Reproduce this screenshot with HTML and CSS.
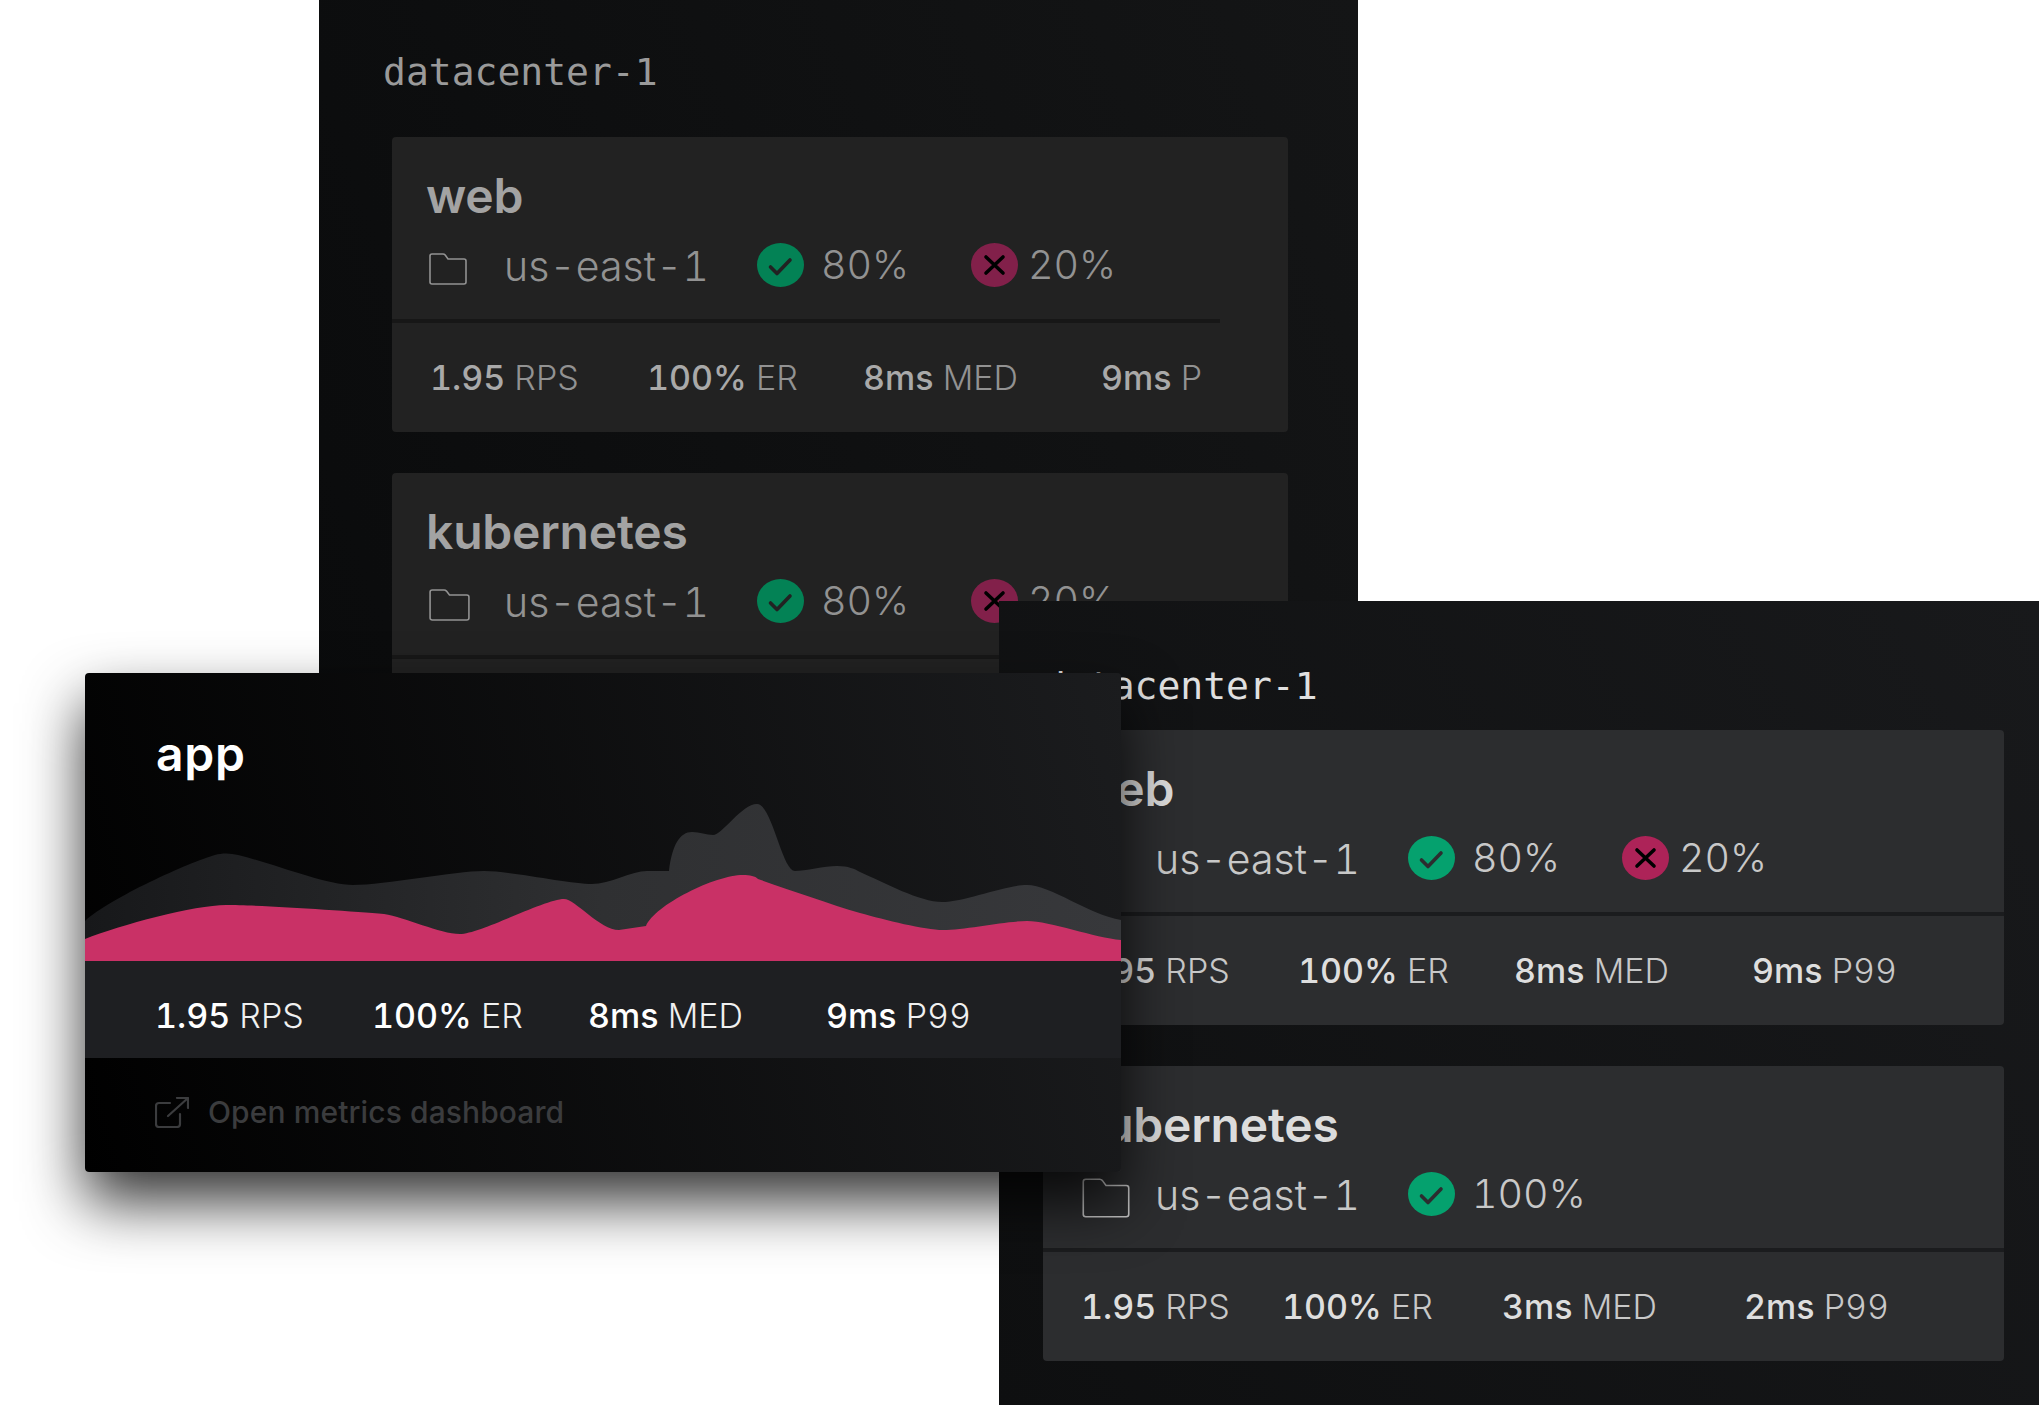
FILE: index.html
```html
<!DOCTYPE html>
<html lang="en">
<head>
    <meta charset="UTF-8">
    <meta name="viewport" content="width=device-width, initial-scale=1.0">
    <title>Datacenter overview</title>
    <link rel="stylesheet" href="styles.css">
</head>
<body>
    <svg class="defs" width="0" height="0" aria-hidden="true">
        <symbol id="icon-folder" viewBox="0 0 38 32" preserveAspectRatio="none">
            <path d="M3 1h11c1 0 1.600.4 2.200 1.100L19 6h16c1.200 0 2 .8 2 2v21c0 1.200-.8 2-2 2H3c-1.200 0-2-.8-2-2V3c0-1.200.8-2 2-2z" fill="none" stroke="currentColor" stroke-width="1.600" vector-effect="non-scaling-stroke"/>
        </symbol>
        <symbol id="icon-check" viewBox="0 0 47 44">
            <ellipse cx="23.500" cy="22" rx="23.500" ry="22" fill="var(--ok)"/>
            <path d="M13.500 24l6.500 6.500L33 17" fill="none" stroke="var(--ok-mark)" stroke-width="3.600" stroke-linecap="round" stroke-linejoin="round"/>
        </symbol>
        <symbol id="icon-cross" viewBox="0 0 47 44">
            <ellipse cx="23.500" cy="22" rx="23.500" ry="22" fill="var(--bad)"/>
            <path d="M15 14l17 16M32 14L15 30" fill="none" stroke="#000" stroke-width="3.600" stroke-linecap="round"/>
        </symbol>
    </svg>

    <!-- back window -->
    <section class="window window-back">
        <h2 class="dc-name">datacenter-1</h2>
        <div class="card">
            <div class="card-head">
                <h3>web</h3>
                <div class="health">
                    <span class="folder-slot"><svg class="folder"><use href="#icon-folder"/></svg></span>
                    <span class="region">us-east-1</span>
                    <svg class="badge"><use href="#icon-check"/></svg>
                    <span class="pct pct-ok">80%</span>
                    <svg class="badge"><use href="#icon-cross"/></svg>
                    <span class="pct pct-bad">20%</span>
                </div>
            </div>
            <div class="rule rule-short"></div>
            <div class="stats">
                <span><b>1.95</b> RPS</span>
                <span><b>100%</b> ER</span>
                <span><b>8ms</b> MED</span>
                <span><b>9ms</b> P</span>
            </div>
        </div>
        <div class="card">
            <div class="card-head">
                <h3>kubernetes</h3>
                <div class="health">
                    <span class="folder-slot"><svg class="folder folder-mid"><use href="#icon-folder"/></svg></span>
                    <span class="region">us-east-1</span>
                    <svg class="badge"><use href="#icon-check"/></svg>
                    <span class="pct pct-ok">80%</span>
                    <svg class="badge"><use href="#icon-cross"/></svg>
                    <span class="pct pct-bad">20%</span>
                </div>
            </div>
            <div class="rule rule-short"></div>
            <div class="stats">
                <span><b>1.95</b> RPS</span>
            </div>
        </div>
    </section>

    <!-- front right window -->
    <section class="window window-front">
        <h2 class="dc-name">datacenter-1</h2>
        <div class="card">
            <div class="card-head">
                <h3>web</h3>
                <div class="health">
                    <span class="folder-slot"><svg class="folder folder-inset"><use href="#icon-folder"/></svg></span>
                    <span class="region">us-east-1</span>
                    <svg class="badge"><use href="#icon-check"/></svg>
                    <span class="pct pct-ok">80%</span>
                    <svg class="badge"><use href="#icon-cross"/></svg>
                    <span class="pct pct-bad">20%</span>
                </div>
            </div>
            <div class="rule"></div>
            <div class="stats">
                <span><b>1.95</b> RPS</span>
                <span><b>100%</b> ER</span>
                <span><b>8ms</b> MED</span>
                <span><b>9ms</b> P99</span>
            </div>
        </div>
        <div class="card">
            <div class="card-head">
                <h3>kubernetes</h3>
                <div class="health">
                    <span class="folder-slot"><svg class="folder folder-big"><use href="#icon-folder"/></svg></span>
                    <span class="region">us-east-1</span>
                    <svg class="badge"><use href="#icon-check"/></svg>
                    <span class="pct">100%</span>
                </div>
            </div>
            <div class="rule"></div>
            <div class="stats stats-alt">
                <span><b>1.95</b> RPS</span>
                <span><b>100%</b> ER</span>
                <span><b>3ms</b> MED</span>
                <span><b>2ms</b> P99</span>
            </div>
        </div>
    </section>

    <!-- app popover -->
    <section class="window window-app">
        <h3>app</h3>
        <svg class="chart" viewBox="85 790 1036 171" aria-hidden="true">
            <defs>
                <linearGradient id="chart-grey" gradientUnits="userSpaceOnUse" x1="85" y1="0" x2="1120" y2="0">
                    <stop offset="0" stop-color="#17181a"/>
                    <stop offset="0.5" stop-color="#2f3032"/>
                    <stop offset="1" stop-color="#37383b"/>
                </linearGradient>
            </defs>
            <path fill="url(#chart-grey)" d="M85 961V921C110 898 190 862 215 855C222 853 230 853 238 855C275 864 325 885 353 885C385 885 455 871 484 871C510 871 570 884 592 884C610 884 632 871 647 871H669C672 845 680 832 692 832C700 832 706 835 713 835C722 835 742 804 757 804C772 804 782 871 795 871C805 871 825 866 837 866C848 866 855 869 860 872C885 883 920 902 942 902C965 902 1005 885 1027 885C1050 885 1090 915 1121 920V961Z"/>
            <path fill="#c93166" d="M85 961V939C120 925 195 905 226 905C260 905 350 911 384 914C405 917 440 934 460 934C480 934 545 899 564 899C575 899 600 930 619 930L646 926C655 905 715 875 743 875C750 875 755 876 758 879C790 890 830 904 860 913C885 920 925 930 943 930C965 930 1005 921 1027 921C1050 921 1095 938 1121 940V961Z"/>
        </svg>
        <div class="stats">
            <span><b>1.95</b> RPS</span>
            <span><b>100%</b> ER</span>
            <span><b>8ms</b> MED</span>
            <span><b>9ms</b> P99</span>
        </div>
        <a class="metrics-link" href="#">
            <svg class="link-icon" viewBox="0 0 34 31" aria-hidden="true">
                <path d="M15 6H4C2.300 6 1 7.300 1 9v18c0 1.700 1.300 3 3 3h18c1.700 0 3-1.300 3-3V17M13 19L33 1M22 1h11v10" fill="none" stroke="currentColor" stroke-width="2.200" stroke-linecap="round" stroke-linejoin="round"/>
            </svg>
            Open metrics dashboard
        </a>
    </section>
</body>
</html>
```

FILE: styles.css
```css
body {
    margin: 0;
    width: 2039px;
    height: 1407px;
    position: relative;
    overflow: hidden;
    background-color: #fff;
    font-family: Inter, "Noto Sans", sans-serif;
}

.defs {
    position: absolute;
}

h2, h3 {
    margin: 0;
}

/* windows sit on a free canvas and overlap */
.window {
    position: absolute;
    box-sizing: border-box;
    overflow: hidden;
}

.window-back {
    --card: #222222;
    --rule: #171717;
    --title: #a3a3a3;
    --text: #929292;
    --strong: #a9a9a9;
    --ok: #038255;
    --ok-mark: #222;
    --bad: #82204a;
    left: 319px;
    top: 0;
    width: 1039px;
    height: 800px;
    padding: 49px 70px 0 73px;
    background: linear-gradient(70deg, #0a0b0c 0%, #141516 100%);
}

.window-back .dc-name {
    margin: 0 0 42px -9px;
    color: #9a9a9a;
}

.window-front {
    --card: #2c2d2f;
    --rule: #1b1c1e;
    --title: #dcdcdc;
    --text: #c8c8c8;
    --strong: #dedede;
    --ok: #05a16e;
    --ok-mark: #2c2d2f;
    --bad: #ad2358;
    left: 999px;
    top: 601px;
    width: 1040px;
    height: 804px;
    padding: 62px 35px 0 44px;
    background: linear-gradient(60deg, #0e0f10 0%, #18191b 100%);
}

.window-front .dc-name {
    margin: 0 0 21px 0;
    color: #e0e0e0;
}

.dc-name {
    font-family: "DejaVu Sans Mono", monospace;
    font-size: 38px;
    font-weight: 400;
    line-height: 46px;
}

.card {
    height: 295px;
    margin-bottom: 41px;
    border-radius: 4px;
    background-color: var(--card);
}

.card-head {
    height: 182px;
    box-sizing: border-box;
    padding: 29px 0 0 34px;
}

.card-head h3 {
    font-size: 48px;
    font-weight: 600;
    letter-spacing: -0.2px;
    line-height: 60px;
    margin-bottom: 17px;
    color: var(--title);
}

.health {
    display: flex;
    align-items: center;
    height: 44px;
    color: var(--text);
    font-size: 39.5px;
    font-weight: 300;
    font-feature-settings: "tnum";
}

.folder-slot {
    display: flex;
    width: 78px;
    margin-top: 8px;
}

.folder {
    width: 38px;
    height: 32px;
    margin-left: 3px;
}

.folder-mid {
    width: 41px;
}

.folder-inset {
    margin-left: 5px;
}

.folder-big {
    width: 48px;
    height: 40px;
    margin-left: 5px;
}

.region {
    width: 253px;
    margin-top: 1px;
    font-size: 41px;
}

.badge {
    width: 47px;
    height: 44px;
    flex: none;
}

.pct {
    margin-left: 17px;
}

.pct-ok {
    width: 150px;
}

.pct-bad {
    margin-left: 10px;
}

.rule {
    height: 4px;
    background-color: var(--rule);
}

.rule-short {
    width: 828px;
}

.stats {
    display: grid;
    grid-template-columns: 217px 216px 238px auto;
    align-items: center;
    height: 109px;
    padding-left: 38px;
    color: var(--text);
    font-size: 34px;
    font-weight: 300;
    font-feature-settings: "tnum";
    white-space: nowrap;
}

.stats b {
    color: var(--strong);
    font-weight: 500;
}

.stats-alt {
    grid-template-columns: 201px 220px 242px auto;
}

/* app popover */
.window-app {
    left: 85px;
    top: 673px;
    width: 1036px;
    height: 499px;
    overflow: visible;
    border-radius: 4px;
    background: linear-gradient(75deg, #000 0%, #1b1c1e 100%);
    box-shadow: 0 30px 60px rgba(0, 0, 0, 0.8);
}

.window-app h3 {
    padding: 51px 0 0 71px;
    height: 60px;
    line-height: 60px;
    font-size: 48px;
    font-weight: 600;
    letter-spacing: 0.7px;
    color: #fff;
}

.chart {
    display: block;
    width: 1036px;
    height: 171px;
    margin-top: 6px;
}

.window-app .stats {
    box-sizing: border-box;
    height: 97px;
    padding: 12px 0 0 70px;
    background-color: #1e1f22;
    color: #f0f0f0;
}

.window-app .stats b {
    color: #fff;
}

.metrics-link {
    display: flex;
    align-items: center;
    gap: 19px;
    height: 108px;
    padding-left: 70px;
    color: #3b3c3e;
    font-size: 30px;
    font-weight: 500;
    letter-spacing: 0.1px;
    text-decoration: none;
}

.link-icon {
    width: 34px;
    height: 31px;
}
```
